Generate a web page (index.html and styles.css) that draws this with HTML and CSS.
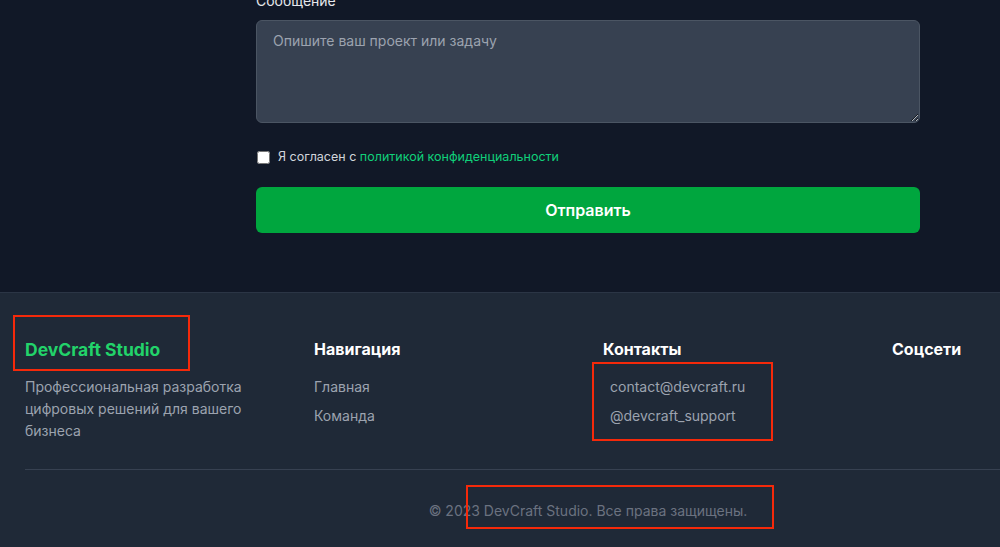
FILE: index.html
```html
<!DOCTYPE html>
<html lang="ru">
<head>
<meta charset="utf-8">
<link rel="stylesheet" href="styles.css">
</head>
<body>
<div class="page">
  <section class="contact">
    <form class="form">
      <label class="label" for="msg">Сообщение</label>
      <textarea id="msg" class="textarea" placeholder="Опишите ваш проект или задачу"></textarea>
      <label class="agree">
        <input type="checkbox" class="check">
        <span>Я согласен с <a class="link" href="#">политикой конфиденциальности</a></span>
      </label>
      <button type="button" class="submit">Отправить</button>
    </form>
  </section>
  <footer class="footer">
    <div class="cols">
      <div class="col">
        <div class="brand">DevCraft Studio</div>
        <p class="desc">Профессиональная разработка цифровых решений для вашего бизнеса</p>
      </div>
      <div class="col">
        <h3 class="heading">Навигация</h3>
        <ul class="list">
          <li>Главная</li>
          <li>Команда</li>
        </ul>
      </div>
      <div class="col">
        <h3 class="heading">Контакты</h3>
        <ul class="list list-contacts">
          <li>contact@devcraft.ru</li>
          <li>@devcraft_support</li>
        </ul>
      </div>
      <div class="col">
        <h3 class="heading">Соцсети</h3>
      </div>
    </div>
    <div class="bottom">
      <p class="copy">© 2023 DevCraft Studio. Все права защищены.</p>
    </div>
  </footer>
  <div class="mark mark-brand"></div>
  <div class="mark mark-contacts"></div>
  <div class="mark mark-copy"></div>
</div>
</body>
</html>
```

FILE: styles.css
```css
* { box-sizing: border-box; }
html, body {
  margin: 0;
  padding: 0;
  overflow: hidden;
  background: #111827;
  font-family: Inter, "Noto Sans", sans-serif;
}
.page {
  width: 1176px;
  position: relative;
  display: flow-root;
}
.contact {
  background: #111827;
  padding: 0 0 59px;
  margin-top: -9px;
}
.form {
  width: 664px;
  margin: 0 auto;
  display: flex;
  flex-direction: column;
}
.label {
  color: #e5e7eb;
  font-size: 14px;
  line-height: 20px;
  margin-bottom: 9px;
}
.textarea {
  height: 103px;
  background: #374151;
  border: 1px solid #4b5563;
  border-radius: 6px;
  padding: 10px 16px;
  font-family: inherit;
  font-size: 14px;
  line-height: 20px;
  color: #f3f4f6;
  resize: vertical;
  outline: none;
}
.textarea::placeholder { color: #9ca3af; }
.agree {
  display: flex;
  align-items: center;
  gap: 8px;
  margin-top: 26px;
  font-size: 12.5px;
  line-height: 16px;
  color: #d1d5db;
}
.check {
  width: 13px;
  height: 13px;
  margin: 0 0 0 1px;
}
.link { color: #10d07a; text-decoration: none; }
.submit {
  margin-top: 22px;
  height: 46px;
  border: 0;
  border-radius: 6px;
  background: #00a63e;
  color: #fff;
  font-family: inherit;
  font-size: 16px;
  font-weight: 600;
}
.footer {
  background: #1f2937;
  border-top: 1px solid #2b3545;
  padding: 42px 25px 0;
  height: 260px;
}
.cols {
  display: grid;
  grid-template-columns: repeat(4, 1fr);
  gap: 30px;
  padding-bottom: 27px;
  border-bottom: 1px solid #374151;
}
.brand {
  color: #22d36a;
  font-size: 17.5px;
  font-weight: 700;
  line-height: 28px;
  margin-top: 1px;
  margin-bottom: 12px;
}
.desc {
  margin: 0;
  color: #9ca3af;
  font-size: 14px;
  line-height: 22px;
  width: 240px;
}
.heading {
  margin: 2px 0 15px;
  color: #fff;
  font-size: 16px;
  font-weight: 700;
  line-height: 24px;
}
.list {
  list-style: none;
  margin: 0;
  padding: 0;
  display: flex;
  flex-direction: column;
  gap: 8px;
  color: #9ca3af;
  font-size: 14px;
  line-height: 21px;
}
.list-contacts { padding-left: 7px; }
.bottom {
  padding-top: 31px;
  text-align: center;
}
.copy {
  margin: 0;
  color: #6b7280;
  font-size: 14px;
  line-height: 20px;
}
.mark {
  position: absolute;
  border: 2px solid #f5290a;
  pointer-events: none;
}
.mark-brand { left: 13px; top: 315px; width: 177px; height: 56px; }
.mark-contacts { left: 592px; top: 362px; width: 181px; height: 79px; }
.mark-copy { left: 466px; top: 485px; width: 308px; height: 44px; }
```
